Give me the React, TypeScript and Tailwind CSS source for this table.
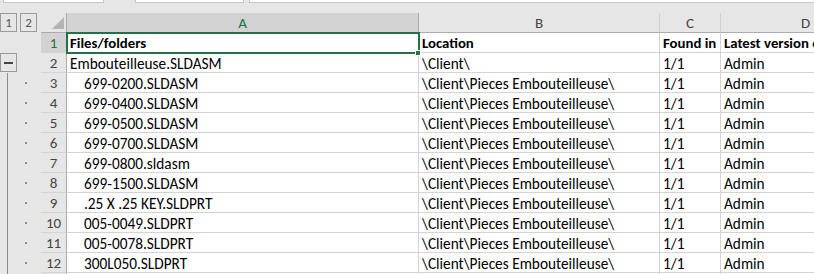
import React from "react";

const rows: { n: number; a: string; b: string; c: string; d: string; indent?: boolean; bold?: boolean }[] = [
  { n: 1, a: "Files/folders", b: "Location", c: "Found in", d: "Latest version of", bold: true },
  { n: 2, a: "Embouteilleuse.SLDASM", b: "\\Client\\", c: "1/1", d: "Admin" },
  { n: 3, a: "699-0200.SLDASM", b: "\\Client\\Pieces Embouteilleuse\\", c: "1/1", d: "Admin", indent: true },
  { n: 4, a: "699-0400.SLDASM", b: "\\Client\\Pieces Embouteilleuse\\", c: "1/1", d: "Admin", indent: true },
  { n: 5, a: "699-0500.SLDASM", b: "\\Client\\Pieces Embouteilleuse\\", c: "1/1", d: "Admin", indent: true },
  { n: 6, a: "699-0700.SLDASM", b: "\\Client\\Pieces Embouteilleuse\\", c: "1/1", d: "Admin", indent: true },
  { n: 7, a: "699-0800.sldasm", b: "\\Client\\Pieces Embouteilleuse\\", c: "1/1", d: "Admin", indent: true },
  { n: 8, a: "699-1500.SLDASM", b: "\\Client\\Pieces Embouteilleuse\\", c: "1/1", d: "Admin", indent: true },
  { n: 9, a: ".25 X .25 KEY.SLDPRT", b: "\\Client\\Pieces Embouteilleuse\\", c: "1/1", d: "Admin", indent: true },
  { n: 10, a: "005-0049.SLDPRT", b: "\\Client\\Pieces Embouteilleuse\\", c: "1/1", d: "Admin", indent: true },
  { n: 11, a: "005-0078.SLDPRT", b: "\\Client\\Pieces Embouteilleuse\\", c: "1/1", d: "Admin", indent: true },
  { n: 12, a: "300L050.SLDPRT", b: "\\Client\\Pieces Embouteilleuse\\", c: "1/1", d: "Admin", indent: true },
];

const cell = "h-[20px] shrink-0 border-b border-r border-[#d4d4d4] bg-white px-[3px] leading-[21px] whitespace-nowrap overflow-hidden text-black";

export default function App() {
  return (
    <div className="relative w-[814px] h-[274px] overflow-hidden bg-[#e6e6e6] font-['Carlito','Lato',sans-serif] text-[15.3px]">
      {/* formula bar remnants */}
      <div className="flex h-[13px] items-start">
        <div className="ml-[3px] h-[3px] w-[101px] border-x border-b border-[#c6c6c6] bg-white" />
        <div className="ml-[31px] h-[3px] w-[109px] border-x border-b border-[#c6c6c6] bg-white" />
        <div className="ml-[5px] h-[3px] flex-1 border-l border-b border-[#c6c6c6] bg-white" />
      </div>
      <div className="flex">
        {/* outline gutter */}
        <div className="w-[41px] shrink-0 flex flex-col">
          <div className="h-[20px] flex gap-[3px] items-start">
            <div className="h-[19px] w-[17px] border border-[#9a9a9a] flex items-center justify-center text-[13px] text-[#555] leading-none">1</div>
            <div className="h-[19px] w-[17px] border border-[#9a9a9a] flex items-center justify-center text-[13px] text-[#555] leading-none">2</div>
          </div>
          <div className="h-[20px]" />
          <div className="h-[20px] flex items-start">
            <div className="h-[19px] w-[17px] border border-[#9a9a9a] flex items-center justify-center">
              <div className="h-[2px] w-[9px] bg-[#444]" />
            </div>
          </div>
          <div className="ml-[7px] border-l border-[#8c8c8c] flex flex-col">
            {rows.slice(2).map((r) => (
              <div key={r.n} className="h-[20px] flex items-center pl-[17px]">
                <div className="h-[2px] w-[2px] bg-[#8c8c8c]" />
              </div>
            ))}
            <div className="h-[20px]" />
          </div>
        </div>
        {/* sheet */}
        <div className="flex flex-col">
          {/* column headers */}
          <div className="flex h-[20px] text-[#444] text-[15px] leading-[20px]">
            <div className="w-[26px] shrink-0 border-b border-r border-[#ababab] relative">
              <svg className="absolute left-[11px] top-[4px]" width="12" height="12" viewBox="0 0 12 12">
                <polygon points="12,0 12,12 0,12" fill="#b4b4b4" />
              </svg>
            </div>
            <div className="w-[352px] shrink-0 border-b border-r border-[#ababab] bg-[#d2d2d2] text-center text-[#217346]">A</div>
            <div className="w-[241px] shrink-0 border-b border-r border-b-[#ababab] border-r-[#d0d0d0] text-center">B</div>
            <div className="w-[61px] shrink-0 border-b border-r border-b-[#ababab] border-r-[#d0d0d0] text-center">C</div>
            <div className="w-[170px] shrink-0 border-b border-r border-b-[#ababab] border-r-[#d0d0d0] text-center">D</div>
          </div>
          {rows.map((r) => (
            <div key={r.n} className={`flex ${r.bold ? "font-bold text-[14.8px]" : ""}`}>
              <div
                className={`h-[20px] w-[26px] shrink-0 border-b border-r border-b-[#d4d4d4] border-r-[#ababab] text-center leading-[20px] text-[15px] font-normal ${
                  r.n === 1 ? "bg-[#d2d2d2] text-[#217346]" : "text-[#444]"
                }`}
              >
                {r.n}
              </div>
              <div className={`${cell} w-[352px] ${r.indent ? "pl-[17px]" : ""}`}>{r.a}</div>
              <div className={`${cell} w-[241px]`}>{r.b}</div>
              <div className={`${cell} w-[61px]`}>{r.c}</div>
              <div className={`${cell} w-[170px]`}>{r.d}</div>
            </div>
          ))}
          <div className="flex">
            <div className="h-[20px] w-[26px] shrink-0 border-r border-[#ababab]" />
            <div className="h-[20px] w-[352px] shrink-0 border-r border-[#d4d4d4] bg-white" />
            <div className="h-[20px] w-[241px] shrink-0 border-r border-[#d4d4d4] bg-white" />
            <div className="h-[20px] w-[61px] shrink-0 border-r border-[#d4d4d4] bg-white" />
            <div className="h-[20px] w-[170px] shrink-0 border-r border-[#d4d4d4] bg-white" />
          </div>
        </div>
      </div>
      {/* selection of A1 */}
      <div className="absolute left-[66px] top-[32px] w-[354px] h-[22px] border-2 border-[#217346] pointer-events-none" />
      <div className="absolute left-[415px] top-[50px] w-[6px] h-[6px] bg-[#217346] border border-white pointer-events-none" />
    </div>
  );
}
